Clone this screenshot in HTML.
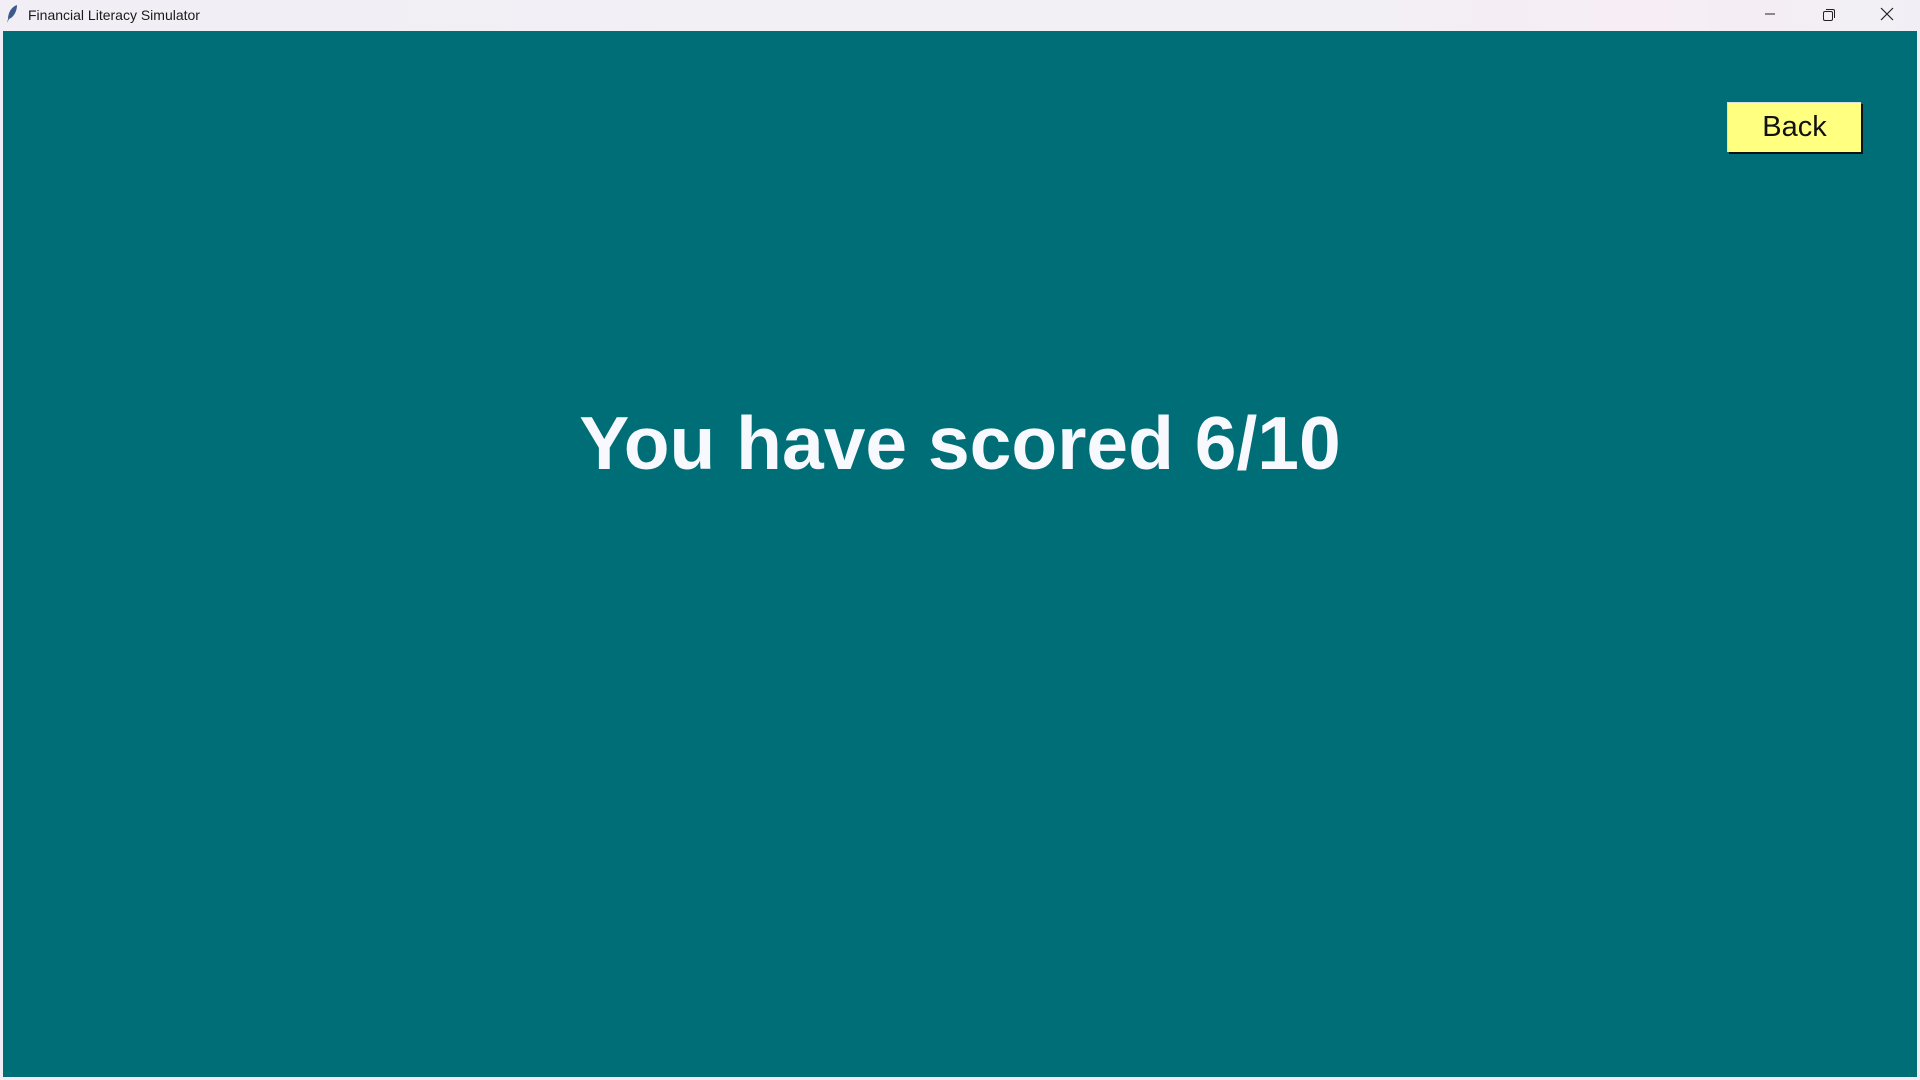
<!DOCTYPE html>
<html><head><style>
html,body{margin:0;padding:0;width:1920px;height:1080px;overflow:hidden;background:#f0eef4;font-family:"Liberation Sans",sans-serif;}
.title{position:absolute;left:0;top:0;width:1920px;height:31px;background:linear-gradient(90deg,#f1eff5 0%,#f2eff5 70%,#f6eef4 85%,#f1eff5 100%);}
.title span{position:absolute;left:28px;top:7px;font-size:14px;color:#1a1a1a;}
.main{position:absolute;left:3px;top:31px;width:1914px;height:1046px;background:#006e76;}
.score{position:absolute;left:0;width:1914px;top:369px;text-align:center;font-weight:bold;font-size:75px;color:#f8f8ff;line-height:86px;}
.back{position:absolute;left:1724px;top:71px;width:133px;height:49px;background:#ffff80;border-top:1px solid #ddd;border-left:1px solid #ddd;box-shadow:2px 2px 0 #111;font-size:29px;text-align:center;line-height:49px;color:#111;}
</style></head><body>
<div class="title">
<svg style="position:absolute;left:5px;top:4px" width="14" height="20" viewBox="0 0 14 20"><path d="M12 1 C6 3 3 9 3 15 L2 19 L4 15 C9 13 12 7 12 1Z" fill="#3b5a8c"/></svg>
<span>Financial Literacy Simulator</span>
<svg style="position:absolute;left:1762px;top:8px" width="16" height="16"><line x1="3" y1="6" x2="13" y2="6" stroke="#222" stroke-width="1"/></svg>
<svg style="position:absolute;left:1821px;top:7px" width="16" height="16"><rect x="2.5" y="4.5" width="9" height="9" rx="1.5" fill="none" stroke="#222"/><path d="M5 2.5 H12 Q13.5 2.5 13.5 4 V11" fill="none" stroke="#222"/></svg>
<svg style="position:absolute;left:1879px;top:6px" width="16" height="16"><path d="M2 2 L14 14 M14 2 L2 14" stroke="#222" stroke-width="1.2"/></svg>
</div>
<div class="main">
<div class="score">You have scored 6/10</div>
<div class="back">Back</div>
</div>
</body></html>
